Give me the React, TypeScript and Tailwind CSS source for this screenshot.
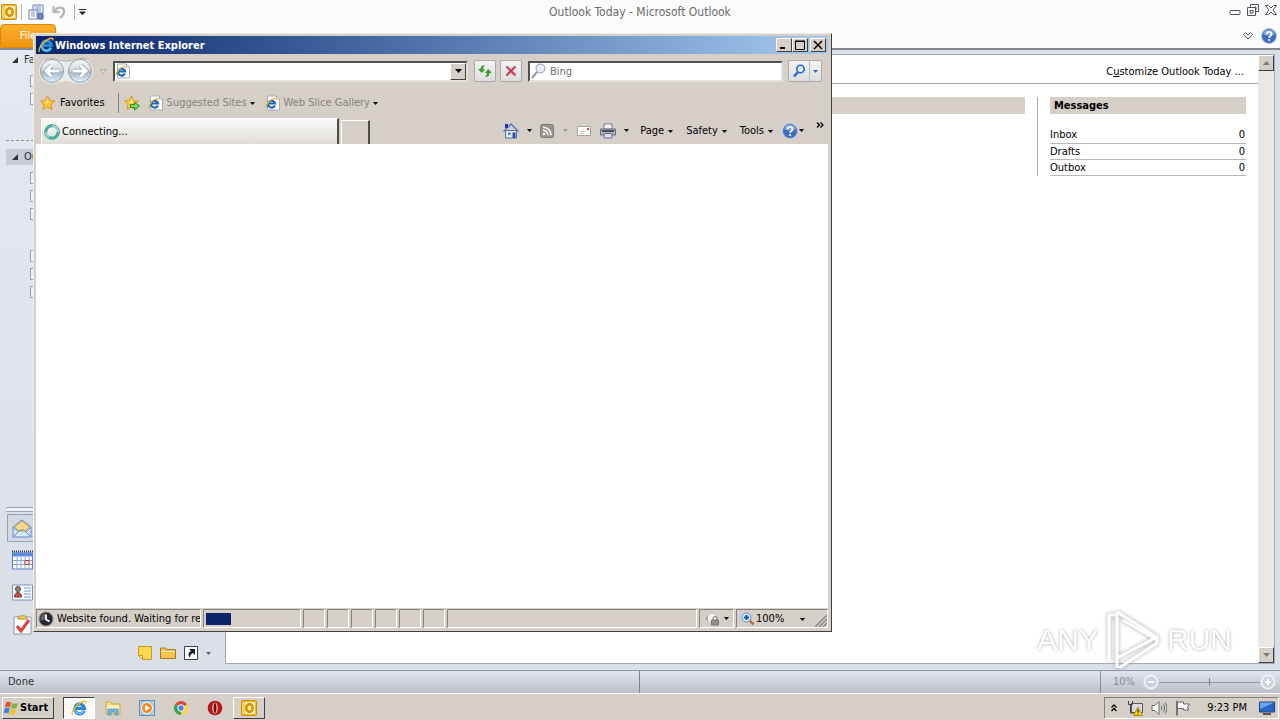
import type { ReactNode } from "react";

const raised =
  "border border-t-white border-l-white border-r-[#404040] border-b-[#404040] bg-[#d5cfc8]";
const sunken =
  "border border-t-[#808080] border-l-[#808080] border-r-white border-b-white";

function Caret({ className = "text-black" }: { className?: string }) {
  return (
    <svg viewBox="0 0 5 3" className={`h-[3px] w-[5px] shrink-0 ${className}`} aria-hidden="true">
      <path d="M0 0h5L2.500 3z" fill="currentColor" />
    </svg>
  );
}

function IeLogo({ className = "size-4" }: { className?: string }) {
  return (
    <svg viewBox="0 0 16 16" className={`shrink-0 ${className}`} aria-hidden="true">
      <path
        d="M13.200 10.600A4.900 4.900 0 1 1 13.500 8.400H5"
        fill="none"
        stroke="#2a86d4"
        strokeWidth="3.200"
      />
      <path d="M12.300 10.700A4.300 4.300 0 0 1 4 9.500" fill="none" stroke="#7cd0f6" strokeWidth="1.200" />
      <path
        d="M1.600 14.800C-.5 12.500 4.500 5.500 10 2.300c3-1.700 5.200-1.400 4.700 1"
        fill="none"
        stroke="#f0b92c"
        strokeWidth="1.500"
      />
    </svg>
  );
}

function IePage() {
  return (
    <svg viewBox="0 0 16 16" className="size-4 shrink-0" aria-hidden="true">
      <path d="M2.500 1h9L14.500 4V15h-12z" fill="#fff" stroke="#a4abb4" />
      <path d="M11.500 1v3h3" fill="#e8edf3" stroke="#a4abb4" />
      <path d="M9.800 10.500A3.500 3.500 0 1 1 10 8.500H4" fill="none" stroke="#1b66b8" strokeWidth="2.200" />
      <path d="M1 12.500C0 11 4 5.500 7.500 4c2-1 3-.5 2.600.8" fill="none" stroke="#eab42a" strokeWidth="1.300" />
    </svg>
  );
}

function OutlookLogo() {
  return (
    <svg viewBox="0 0 16 16" className="size-4 shrink-0" aria-hidden="true">
      <rect x=".5" y=".5" width="15" height="15" rx="1" fill="#f4b624" stroke="#d08c18" />
      <path d="M1 3l3-1v12l-3-1z" fill="#fbd24c" />
      <rect x="4" y="2" width="10" height="12" fill="#fff0b4" />
      <ellipse cx="8.500" cy="8" rx="3.200" ry="3.900" fill="none" stroke="#d8920c" strokeWidth="2.600" />
    </svg>
  );
}

function Star({ arrow = false }: { arrow?: boolean }) {
  return (
    <svg viewBox="0 0 16 16" className="size-4 shrink-0" aria-hidden="true">
      <path
        d="M7.500.8l2.100 4.700 5.100.6-3.800 3.400 1.100 5.100-4.500-2.600L3 14.600l1.100-5.100L.4 6.100l5-.6z"
        fill="#ffc82e"
        stroke="#d8962a"
      />
      <path d="M7.500 3l1.500 4-1.500 2-3-2.500h2z" fill="#ffe88c" />
      {arrow && <path d="M6.500 9.500h4V7.300l5 3.700-5 4v-2.500h-4z" fill="#7be05a" stroke="#1c8a22" />}
    </svg>
  );
}

function HelpIcon() {
  return (
    <svg viewBox="0 0 16 16" className="size-4 shrink-0" aria-hidden="true">
      <circle cx="8" cy="8" r="7.500" fill="#3c6cc4" stroke="#b4c6e4" />
      <path d="M2 6a6.300 6.300 0 0 1 12 0c-3 2-8 2-12 0z" fill="#7ba2e0" />
      <path d="M5.600 6.200c0-3.200 5-3.200 5 0 0 1.800-2.500 1.700-2.500 3.600" fill="none" stroke="#fff" strokeWidth="1.800" />
      <circle cx="8.100" cy="12" r="1.100" fill="#fff" />
    </svg>
  );
}

function NavArrows() {
  return (
    <svg viewBox="0 0 56 28" className="h-7 w-14" aria-hidden="true">
      <defs>
        <linearGradient id="orb" x1="0" y1="0" x2="0" y2="1">
          <stop offset="0" stopColor="#f8f9fa" />
          <stop offset=".46" stopColor="#d4d9de" />
          <stop offset=".54" stopColor="#a8b8c6" />
          <stop offset="1" stopColor="#dcf2fc" />
        </linearGradient>
      </defs>
      <path d="M14 1c6 0 8 2 14 2s8-2 14-2a13 13 0 0 1 0 26c-6 0-9-3-14-3s-8 3-14 3a13 13 0 0 1 0-26z" fill="#eceae8" />
      <path d="M7 3c7-4 13 1 21 1s14-5 21-1" fill="none" stroke="#a9a8a8" />
      <circle cx="14" cy="14" r="11.500" fill="url(#orb)" stroke="#97a1ab" />
      <circle cx="42" cy="14" r="11.500" fill="url(#orb)" stroke="#97a1ab" />
      <path d="M21 14H8m5.500-5.500L8 14l5.500 5.500" fill="none" stroke="#8e9cab" strokeWidth="4.500" />
      <path d="M35 14h13m-5.500-5.500L48 14l-5.500 5.500" fill="none" stroke="#8e9cab" strokeWidth="4.500" />
      <path d="M21 14H8m5.500-5.500L8 14l5.500 5.500" fill="none" stroke="#fff" strokeWidth="3" />
      <path d="M35 14h13m-5.500-5.500L48 14l-5.500 5.500" fill="none" stroke="#fff" strokeWidth="3" />
    </svg>
  );
}

const navIcons: { label: string; icon: ReactNode }[] = [
  {
    label: "Mail",
    icon: (
      <>
        <path d="M1 9l9-7 9 7v10H1z" fill="#d5e6fa" stroke="#6489bd" />
        <path d="M3 9l7-6 7 6-3 4H6z" fill="#fbd98c" stroke="#dba23c" />
        <path d="M1 19l7-7h4l7 7M1 9l6 5M19 9l-6 5" fill="none" stroke="#6489bd" />
      </>
    ),
  },
  {
    label: "Calendar",
    icon: (
      <>
        <path d="M.5 3h20v16H.5z" fill="#fff" stroke="#5b7ec4" />
        <path d="M0 3h21v3.500H0z" fill="#5a8be0" />
        <path d="M0 1.500h21" stroke="#303850" strokeWidth="2" strokeDasharray="1 1" />
        <path d="M1 10.500h19M1 14.500h19M5 7v12M9 7v12M13 7v12M17 7v12" stroke="#8ba5d4" />
        <path d="M13 10.500h4v4h-4z" fill="#fff" stroke="#d0342c" />
      </>
    ),
  },
  {
    label: "Contacts",
    icon: (
      <>
        <path d="M.5 3h20v15H.5z" fill="#f6f9fd" stroke="#7c93bb" />
        <circle cx="6" cy="7" r="2.500" fill="#a08070" stroke="#4c4c4c" />
        <path d="M2.500 15c0-6 7-6 7 0z" fill="#cf4a32" stroke="#6b4038" />
        <path d="M12 6h7M12 9h7M12 12h7M12 15h7" stroke="#6c9be0" />
      </>
    ),
  },
  {
    label: "Tasks",
    icon: (
      <>
        <path d="M2 3h17v17H2z" fill="#fff" stroke="#8297bd" />
        <path d="M6 4c0-3 9-3 9 0v1H6z" fill="#f5cf62" stroke="#b48a26" />
        <path d="M5 12l4 5 8-11" fill="none" stroke="#e2403a" strokeWidth="3" />
      </>
    ),
  },
];

function OutlookTitleBar() {
  return (
    <header className="grid h-6 shrink-0 grid-cols-[1fr_auto_1fr] items-center bg-[#fbfbfb]">
      <div className="flex items-center gap-1 pl-px">
        <OutlookLogo />
        <span className="h-4 w-px bg-[#b8b8b8]" />
        <button type="button" aria-label="Send and receive" className="ml-0.5">
          <svg viewBox="0 0 16 16" className="size-4" aria-hidden="true">
            <path d="M5 1h10v8H5z" fill="#f2f6fc" stroke="#6a7da8" />
            <path d="M7 3h6M7 5h6M7 7h6" stroke="#7b93c4" />
            <path d="M1 6h8v9H1z" fill="#fff" stroke="#6a7da8" />
            <path d="M3 8h4M3 10h4M3 12h4" stroke="#7b93c4" />
            <path d="M10 10h5v5h-5z" fill="#7090cc" stroke="#445f98" />
          </svg>
        </button>
        <button type="button" aria-label="Undo" className="ml-1">
          <svg viewBox="0 0 14 14" className="size-3.5" fill="none" stroke="#b0b3b7" aria-hidden="true">
            <path d="M3 5.500C6 1 12.500 2 12 7c-.3 2.500-2 4.500-4 6" strokeWidth="2.200" />
            <path d="M1.500 1v6h6" strokeWidth="2" />
          </svg>
        </button>
        <span className="ml-1 h-4 w-px bg-[#b8b8b8]" />
        <button type="button" aria-label="Customize toolbar">
          <svg viewBox="0 0 7 6" className="h-1.5 w-[7px]" aria-hidden="true">
            <path d="M0 0h7v1H0zM0 2.500h7L3.500 6z" fill="#222" />
          </svg>
        </button>
      </div>
      <h1 className="text-xs text-[#6a6a6a]">Outlook Today - Microsoft Outlook</h1>
      <div className="flex items-center justify-end gap-1.5 pr-[3px] pb-1 text-[#4a5260]">
        <button type="button" aria-label="Minimize">
          <svg viewBox="0 0 12 12" className="size-3" fill="none" stroke="currentColor" aria-hidden="true">
            <rect x="1" y="6.500" width="10" height="4" rx="1" />
          </svg>
        </button>
        <button type="button" aria-label="Restore">
          <svg viewBox="0 0 12 12" className="size-3" fill="none" stroke="currentColor" aria-hidden="true">
            <path d="M3.500 3.500v-3h8v7h-3M.5 3.500h8v8h-8z" />
            <path d="M3 6.500h3v2.500H3zM8 3h1v3" />
          </svg>
        </button>
        <button type="button" aria-label="Close">
          <svg viewBox="0 0 12 12" className="size-3" fill="none" stroke="currentColor" aria-hidden="true">
            <path d="M.5 1.500h3L6 4l2.500-2.500h3L8 6l3.500 4.500h-3L6 8l-2.500 2.500h-3L4 6z" />
          </svg>
        </button>
      </div>
    </header>
  );
}

function OutlookSidebar() {
  return (
    <aside className="flex w-[225px] shrink-0 flex-col bg-gradient-to-b from-[#e4e9f0] to-[#dadee6] text-[11px] text-[#303030]">
      <TreeGroup name="Favorites" items={2} />
      <div className="mx-1.5 mt-8 border-t border-dashed border-[#8c929a]" />
      <div className="mt-2">
        <TreeGroup name="Outlook" items={3} selected />
      </div>
      <div className="mt-6 flex flex-col">
        {[0, 1, 2].map((i) => (
          <FolderRow key={i} />
        ))}
      </div>
      <div className="mx-1.5 mt-auto h-[5px] shrink-0 border-y border-[#9aa3b0] bg-[#eef1f5]" />
      <div className="mt-0.5 flex flex-col">
        {navIcons.map((item, i) => (
          <button
            key={item.label}
            type="button"
            aria-label={item.label}
            className={`ml-[7px] flex h-7 items-center border pl-1 ${
              i === 0 ? "border-[#9aa3b0] bg-[#d3dae5]" : "mt-1 border-transparent"
            }`}
          >
            <svg viewBox="0 0 21 21" className="size-[21px]" aria-hidden="true">
              {item.icon}
            </svg>
          </button>
        ))}
      </div>
      <div className="flex h-8 items-center justify-end gap-2 pr-3.5 pb-0.5">
        <button type="button" aria-label="Notes">
          <svg viewBox="0 0 14 14" className="size-3.5" aria-hidden="true">
            <path d="M.5.5h13v13h-9l-4-4z" fill="#fbd64e" stroke="#c79a1c" />
            <path d="M.5 9.500l4 4v-4z" fill="#fff2b0" stroke="#c79a1c" />
          </svg>
        </button>
        <button type="button" aria-label="Folder list">
          <svg viewBox="0 0 16 14" className="h-3.5 w-4" aria-hidden="true">
            <path d="M.5 2h5l1 1.500h9v9H.5z" fill="#f6c44c" stroke="#aa7d1c" />
            <path d="M1 5.500h14" stroke="#fff0b8" />
          </svg>
        </button>
        <button type="button" aria-label="Shortcuts">
          <svg viewBox="0 0 14 14" className="size-3.5" aria-hidden="true">
            <path d="M.5.5h13v13H.5z" fill="#fff" stroke="#33415c" />
            <path d="M5 3h6v6L9 7c-2 1-3 2-3 5-3-4-1-6 1-7z" fill="#14203a" />
          </svg>
        </button>
        <button type="button" aria-label="Configure buttons">
          <Caret className="text-[#5a6270]" />
        </button>
      </div>
    </aside>
  );
}

function FolderRow() {
  return (
    <div className="flex h-[18px] items-center pl-[30px]">
      <span className="h-3 w-4 border border-[#9ba1a8] bg-[#f0f2f5]" />
    </div>
  );
}

function TreeGroup({ name, items, selected = false }: { name: string; items: number; selected?: boolean }) {
  return (
    <div>
      <div
        className={`ml-1.5 flex h-4 items-center gap-1.5 pl-1.5 ${
          selected ? "bg-[#c6ccd6]" : "mt-0.5"
        }`}
      >
        <svg viewBox="0 0 6 6" className="size-1.5 shrink-0" aria-hidden="true">
          <path d="M6 0v6H0z" fill="#333" />
        </svg>
        <span>{name}</span>
      </div>
      <div className="pt-1">
        {Array.from({ length: items }, (_, i) => (
          <FolderRow key={i} />
        ))}
      </div>
    </div>
  );
}

function ScrollButton({ down = false }: { down?: boolean }) {
  return (
    <button
      type="button"
      aria-label={down ? "Scroll down" : "Scroll up"}
      className={`flex size-4 items-center justify-center ${raised}`}
    >
      <svg viewBox="0 0 7 4" className="h-1 w-[7px]" aria-hidden="true">
        <path d={down ? "M0 0h7L3.500 4z" : "M0 4h7L3.500 0z"} fill="#7c7c74" />
      </svg>
    </button>
  );
}

function OutlookToday() {
  const folders = ["Inbox", "Drafts", "Outbox"];
  return (
    <main className="mt-1 mr-[5px] mb-1.5 flex min-w-0 flex-1 border border-[#a4abb4] bg-white text-[11px]">
      <div className="flex min-w-0 flex-1 flex-col">
        <div className="flex h-[29px] items-center justify-end border-b border-[#a8a8a8] pt-1.5 pr-3.5">
          <a href="#customize" className="text-black">
            C<u>u</u>stomize Outlook Today ...
          </a>
        </div>
        <div className="flex pt-[13px] pr-3">
          <div className="flex-1 pr-3">
            <div className="h-[17px] bg-[#d5cfc8]" />
          </div>
          <section className="w-[209px] border-l border-[#a8a8a8] pl-3">
            <h2 className="h-[17px] bg-[#d5cfc8] pl-1 text-[11px] leading-[18px] font-bold">Messages</h2>
            <table className="mt-[13px] w-full border-collapse">
              <tbody>
                {folders.map((name) => (
                  <tr key={name} className="h-4 border-b border-[#b8b8b8]">
                    <th scope="row" className="p-0 text-left leading-[15px] font-normal">
                      {name}
                    </th>
                    <td className="p-0 pr-px text-right leading-[15px]">0</td>
                  </tr>
                ))}
              </tbody>
            </table>
          </section>
        </div>
      </div>
      <div className="flex w-4 flex-col justify-between bg-[#ebe8e4]">
        <ScrollButton />
        <ScrollButton down />
      </div>
    </main>
  );
}

function OutlookWindow() {
  return (
    <div className="flex min-h-0 flex-1 flex-col">
      <OutlookTitleBar />
      <div className="flex h-6 shrink-0 items-center justify-between bg-[#fbfbfb]">
        <button
          type="button"
          className="h-full w-14 rounded-t-sm border border-[#d98a12] bg-gradient-to-b from-[#fbb02c] to-[#f2930a] text-[11px] text-white"
        >
          File
        </button>
        <div className="flex items-center gap-2 pr-[3px]">
          <button type="button" aria-label="Expand the ribbon">
            <svg viewBox="0 0 10 8" className="h-2 w-2.5" aria-hidden="true">
              <path d="M.5 2.500l2-2L5 3 7.500.5l2 2L5 7z" fill="none" stroke="#4a5260" />
            </svg>
          </button>
          <button type="button" aria-label="Help">
            <HelpIcon />
          </button>
        </div>
      </div>
      <div className="flex min-h-0 flex-1 border-t-2 border-[#858a90] bg-[#d9e0e8]">
        <OutlookSidebar />
        <OutlookToday />
      </div>
      <footer className="grid h-[23px] shrink-0 grid-cols-2 border-t border-[#8f99a6] bg-gradient-to-b from-[#e0e4ee] to-[#bcc0c8] text-[11px] text-[#333]">
        <div className="flex items-center border-r border-[#7c828c] pl-2">Done</div>
        <div className="flex items-center justify-end">
          <div className="flex h-full items-center gap-2 border-l border-[#8a909a] pl-3 pr-1 text-[#858a92]">
            <span>10%</span>
            <div className="flex items-center">
              <ZoomKnob label="Zoom out" path="M5 8h6" />
              <div className="flex h-2 w-[101px] items-center justify-center bg-[linear-gradient(#8f959e,#8f959e)] bg-[length:100%_1px] bg-center bg-no-repeat">
                <span className="h-2 w-px bg-[#7c828c]" />
              </div>
              <ZoomKnob label="Zoom in" path="M5 8h6M8 5v6" />
            </div>
          </div>
        </div>
      </footer>
    </div>
  );
}

function ZoomKnob({ label, path }: { label: string; path: string }) {
  return (
    <button type="button" aria-label={label}>
      <svg viewBox="0 0 16 16" className="size-4" aria-hidden="true">
        <circle cx="8" cy="8" r="6.500" fill="#cdd1d9" stroke="#eef0f4" strokeWidth="2" />
        <path d={path} stroke="#fff" strokeWidth="2" />
      </svg>
    </button>
  );
}

function Watermark() {
  return (
    <div className="pointer-events-none absolute right-12 bottom-12 flex items-center gap-1 font-['Liberation_Sans_Narrow','Liberation_Sans',sans-serif] text-3xl text-white [text-shadow:0_0_3px_#999] opacity-90">
      <span>ANY</span>
      <svg viewBox="0 0 60 64" className="h-16 w-[60px] drop-shadow-[0_0_2px_#999]" aria-hidden="true">
        <path
          d="M12 7H6v46M14 4l40 25v6L16 60M14 4v46l40-21M20 12l34 20M14 50v10"
          fill="none"
          stroke="#fff"
          strokeWidth="3"
          strokeLinejoin="round"
        />
      </svg>
      <span>RUN</span>
    </div>
  );
}

function WindowButton({ label, children }: { label: string; children: ReactNode }) {
  return (
    <button type="button" aria-label={label} className={`flex h-3.5 w-4 items-center justify-center ${raised}`}>
      <svg viewBox="0 0 10 10" className="size-2.5" fill="none" stroke="#000" aria-hidden="true">
        {children}
      </svg>
    </button>
  );
}

function AddressRow() {
  const glass = "border border-[#aaa9a8] rounded-xs bg-gradient-to-b from-[#f3f3f3] to-[#dcdedf]";
  const field = "border-2 border-t-[#505050] border-l-[#505050] border-r-[#e4e0da] border-b-[#e4e0da] bg-white";
  return (
    <div className="flex h-[34px] shrink-0 items-center pr-[6px] pl-[2px]">
      <button type="button" aria-label="Back and forward">
        <NavArrows />
      </button>
      <button type="button" aria-label="Recent pages" className="mx-0.5 flex w-[15px] justify-center">
        <svg viewBox="0 0 7 5" className="h-[5px] w-[7px]" aria-hidden="true">
          <path d="M.5.5h6L3.500 4z" fill="#e6e2dc" stroke="#aaa59e" />
        </svg>
      </button>
      <div className={`flex h-[21px] w-[355px] items-center ${field}`}>
        <IePage />
        <input type="text" aria-label="Address" className="h-full min-w-0 flex-1 px-1 outline-none" />
        <button type="button" aria-label="Show addresses" className={`flex h-full w-4 items-center justify-center ${raised}`}>
          <svg viewBox="0 0 7 4" className="h-1 w-[7px]" aria-hidden="true">
            <path d="M0 0h7L3.500 4z" />
          </svg>
        </button>
      </div>
      <button type="button" aria-label="Refresh" className={`ml-1.5 flex size-[22px] items-center justify-center ${glass}`}>
        <svg viewBox="0 0 16 16" className="size-4" fill="#3a9a30" aria-hidden="true">
          <path d="M8 2C5 2 3.500 3.500 3.500 6h-2.500L4.800 10 8 6H6c0-1.500.5-2.500 2-4z" />
          <path d="M8 14c3 0 4.500-1.500 4.500-4h2.500L11.200 6 8 10h2c0 1.500-.5 2.500-2 4z" />
        </svg>
      </button>
      <button type="button" aria-label="Stop" className={`ml-1 flex size-[22px] items-center justify-center ${glass}`}>
        <svg viewBox="0 0 12 12" className="size-3" aria-hidden="true">
          <path d="M1.500 1.500l9 9M10.500 1.500l-9 9" stroke="#c8384a" strokeWidth="2" />
        </svg>
      </button>
      <div className={`ml-1.5 flex h-[21px] min-w-0 flex-1 items-center ${field}`}>
        <svg viewBox="0 0 16 16" className="ml-px size-4 shrink-0" aria-hidden="true">
          <circle cx="9.500" cy="5.500" r="4.500" fill="#e4f0fa" stroke="#8d98a6" />
          <path d="M6 9l-5 6" stroke="#8d98a6" strokeWidth="2" />
        </svg>
        <input
          type="text"
          aria-label="Search"
          placeholder="Bing"
          className="h-full min-w-0 flex-1 pt-px pl-[3px] outline-none placeholder:text-[#6f6f6f]"
        />
      </div>
      <div className={`ml-[5px] flex h-[22px] w-[34px] ${glass}`}>
        <button type="button" aria-label="Search the web" className="flex flex-1 items-center justify-center">
          <svg viewBox="0 0 14 14" className="size-3.5" aria-hidden="true">
            <circle cx="8.500" cy="5" r="3.700" fill="#e6f1ff" stroke="#2a62d0" strokeWidth="1.600" />
            <path d="M6 8l-4 4.500" stroke="#2a62d0" strokeWidth="2.400" />
          </svg>
        </button>
        <button type="button" aria-label="Search options" className="flex w-3 items-center justify-center border-l border-[#b8b8b8]">
          <Caret className="text-[#2a66b8]" />
        </button>
      </div>
    </div>
  );
}

function FavoritesRow() {
  return (
    <div className="flex h-[29px] shrink-0 items-center pt-px pl-1 whitespace-nowrap">
      <button type="button" className="flex items-center gap-1">
        <Star />
        Favorites
      </button>
      <span className="ml-[13px] h-5 w-px bg-[#85817c]" />
      <button type="button" aria-label="Add to Favorites Bar" className="ml-[5px]">
        <Star arrow />
      </button>
      <button type="button" className="ml-2 flex w-[107px] items-center gap-[3px] text-[#85827e]">
        <IePage />
        <span className="flex-1 text-left">Suggested Sites</span>
        <Caret />
      </button>
      <button type="button" className="ml-[10px] flex w-[113px] items-center gap-[3px] text-[#85827e]">
        <IePage />
        <span className="min-w-0 flex-1 text-left">Web Slice Gallery</span>
        <Caret />
      </button>
    </div>
  );
}

function TabRow() {
  const menus = ["Page", "Safety", "Tools"];
  return (
    <div className="flex h-[27px] shrink-0 items-end pl-[5px]">
      <button
        type="button"
        role="tab"
        aria-selected="true"
        className="flex h-[26px] w-[298px] items-center gap-0.5 border-t border-r-2 border-l border-t-white border-l-white border-r-[#504c48] bg-gradient-to-b from-[#fbfbfa] to-[#e0ddd8] pt-px pl-0.5"
      >
        <svg viewBox="0 0 16 16" className="size-4" fill="none" aria-hidden="true">
          <circle cx="8" cy="8" r="6" stroke="#9cd8d0" strokeWidth="3" />
          <circle cx="8" cy="8" r="7.500" stroke="#5aaca4" />
          <path d="M2 8a6 6 0 0 1 6-6M14 8a6 6 0 0 1-9 5" stroke="#3fa59c" strokeWidth="2" />
        </svg>
        Connecting...
      </button>
      <button
        type="button"
        aria-label="New tab"
        className="ml-0.5 h-6 w-[29px] border-t border-r-2 border-l border-t-white border-l-white border-r-[#504c48]"
      />
      <div className="flex h-full flex-1 items-center justify-end">
        <button type="button" aria-label="Home" className="flex items-center gap-2">
          <svg viewBox="0 0 16 16" className="size-4" aria-hidden="true">
            <path d="M2.500 7.500h11V15h-11z" fill="#dfeafa" stroke="#55719c" />
            <path d="M.5 8.500L8 1l7.500 7.500" fill="none" stroke="#5d7bb0" strokeWidth="1.500" />
            <path d="M2 1h3v4H2z" fill="#2434b8" />
            <path d="M9.500 9.500h3V15h-3z" fill="#2c4f94" />
            <path d="M5 9.500h2.500V12H5z" fill="#4d7ac0" />
          </svg>
          <Caret />
        </button>
        <button type="button" aria-label="Feeds" className="ml-2 flex items-center gap-[9px]">
          <svg viewBox="0 0 14 14" className="size-3.5" aria-hidden="true">
            <rect x=".5" y=".5" width="13" height="13" rx="2" fill="#98948f" stroke="#7c7873" />
            <circle cx="4" cy="10" r="1.300" fill="#fff" />
            <path d="M3 6.200a5 5 0 0 1 5 5M3 3.200a8 8 0 0 1 8 8" fill="none" stroke="#fff" strokeWidth="1.500" />
          </svg>
          <Caret className="text-[#9b9792]" />
        </button>
        <button type="button" aria-label="Read mail" className="ml-2">
          <svg viewBox="0 0 16 16" className="size-4" aria-hidden="true">
            <path d="M1.500 3.500h13v9h-13z" fill="#fbfbfb" stroke="#a8a29c" />
            <path d="M11 5h2v2h-2z" fill="#d43a34" />
            <path d="M4 8.500h5M4 10.500h4" stroke="#ccc8c4" />
          </svg>
        </button>
        <button type="button" aria-label="Print" className="ml-2 flex items-center gap-2">
          <svg viewBox="0 0 16 16" className="size-4" aria-hidden="true">
            <path d="M4 1h8v5H4z" fill="#fff" stroke="#6f7682" />
            <path d="M.5 6h15v6H.5z" fill="#b4b6ba" stroke="#6a6d72" />
            <path d="M2 8h12" stroke="#4a4c50" strokeWidth="2" />
            <path d="M4 10.500h8V15H4z" fill="#cfe0f2" stroke="#6f7682" />
          </svg>
          <Caret />
        </button>
        {menus.map((name, i) => (
          <button
            key={name}
            type="button"
            className={`flex items-center gap-1 pt-px ${i === 0 ? "ml-[11px]" : "ml-[13px]"}`}
          >
            {name}
            <Caret />
          </button>
        ))}
        <button type="button" aria-label="Help" className="ml-[9px] flex items-center gap-px">
          <HelpIcon />
          <Caret />
        </button>
        <button type="button" aria-label="More commands" className="mr-1 mb-3 ml-3">
          <svg viewBox="0 0 8 6" className="h-1.5 w-2" fill="none" stroke="#000" strokeWidth="1.300" aria-hidden="true">
            <path d="M1 .5L3.500 3 1 5.500M4.500.5L7 3 4.500 5.500" />
          </svg>
        </button>
      </div>
    </div>
  );
}

function IeStatusBar() {
  return (
    <div className="flex h-[21px] shrink-0 items-center gap-[2px] bg-[#d5cfc8]">
      <div className={`flex h-[19px] w-[165px] items-center gap-[3px] overflow-hidden pt-px whitespace-nowrap ${sunken}`}>
        <svg viewBox="0 0 16 16" className="ml-px size-4 shrink-0" aria-hidden="true">
          <circle cx="8" cy="8" r="7" fill="#26282c" stroke="#8c8c8c" />
          <path d="M8 8V2.500A5.500 5.500 0 0 0 2.800 10z" fill="#606468" />
          <path d="M8 3.500v5l3.500 2" fill="none" stroke="#fff" strokeWidth="1.800" />
        </svg>
        Website found. Waiting for re
      </div>
      <div role="progressbar" aria-label="Loading" className={`flex h-[19px] w-[98px] items-center pl-0.5 ${sunken}`}>
        <span className="h-3 w-[25px] bg-[#0a246a]" />
      </div>
      {Array.from({ length: 6 }, (_, i) => (
        <div key={i} className={`h-[19px] w-[22px] ${sunken}`} />
      ))}
      <div className={`h-[19px] flex-1 ${sunken}`} />
      <button type="button" aria-label="Protected mode" className={`flex h-[19px] w-[35px] items-center justify-between px-1 ${sunken}`}>
        <svg viewBox="0 0 16 16" className="size-4" aria-hidden="true">
          <circle cx="8" cy="7" r="5" fill="#f0efee" stroke="#c4c0bc" />
          <path d="M1 7l3-3v6z" fill="#a8a4a0" />
          <path d="M9 9V7.500a2 2 0 0 1 4 0V9" fill="none" stroke="#77736f" />
          <path d="M7.500 9h7v5h-7z" fill="#918d89" stroke="#77736f" />
        </svg>
        <Caret />
      </button>
      <div className={`flex h-[19px] w-[92px] items-center justify-between pl-1 ${sunken}`}>
        <button type="button" className="flex w-16 items-center gap-px pt-px">
          <svg viewBox="0 0 14 14" className="size-3.5" aria-hidden="true">
            <path d="M8.500 8.500l4 4" stroke="#b0763a" strokeWidth="2.500" />
            <circle cx="5.500" cy="5.500" r="4.500" fill="#d4e8fc" stroke="#5e94d0" />
            <path d="M5.500 3v5M3 5.500h5" stroke="#1c58a8" strokeWidth="2" />
          </svg>
          <span className="flex-1 text-left whitespace-nowrap">100%</span>
          <Caret />
        </button>
        <svg viewBox="0 0 12 12" className="mt-1 size-3" aria-hidden="true">
          <path d="M0 12L12 0M4 12l8-8M8 12l4-4" stroke="#8c8883" strokeWidth="1.500" />
        </svg>
      </div>
    </div>
  );
}

function IeWindow() {
  return (
    <div className="absolute top-[33px] left-[33px] flex h-[599px] w-[799px] flex-col border border-t-[#f0eeea] border-l-[#f0eeea] border-r-[#404040] border-b-[#404040] bg-[#d5cfc8] py-0.5 pr-[3px] pl-0.5 text-[11px] text-black">
      <div className="flex h-[18px] shrink-0 items-center bg-gradient-to-r from-[#0a246a] to-[#a6caf0] pr-0.5 pl-[2px]">
        <IeLogo />
        <h2 className="ml-px flex-1 pt-px text-[11px] font-bold text-white">Windows Internet Explorer</h2>
        <WindowButton label="Minimize IE">
          <path d="M1 8h5" strokeWidth="2" />
        </WindowButton>
        <WindowButton label="Maximize IE">
          <path d="M.5 1.500h9v8h-9zM0 1h10" />
        </WindowButton>
        <span className="w-0.5" />
        <WindowButton label="Close IE">
          <path d="M1 1l8 8M9 1L1 9" strokeWidth="1.500" />
        </WindowButton>
      </div>
      <AddressRow />
      <FavoritesRow />
      <TabRow />
      <div className="min-h-0 flex-1 bg-white" />
      <IeStatusBar />
    </div>
  );
}

function Taskbar() {
  const task = "flex h-[22px] w-8 items-center justify-center";
  return (
    <footer className="flex h-[27px] shrink-0 items-center border-t border-white bg-[#d5cfc8] pt-px pr-px pl-0.5 text-[11px]">
      <button type="button" className={`flex h-[22px] w-[52px] items-center gap-px font-bold ${raised}`}>
        <svg viewBox="0 0 16 16" className="size-4" aria-hidden="true">
          <path d="M3 2.500c2-1 3.500-1 5 0L7 7.500c-1.500-1-3-1-5 0z" fill="#e8502c" />
          <path d="M9 3c2 1 3.500 1 6 0l-1.500 5c-2 1-3.500 1-5.500 0z" fill="#7cb83c" />
          <path d="M1.800 8.500c2-1 3.500-1 5 0l-1.300 5c-1.500-1-3-1-5 0z" fill="#3f7fd4" />
          <path d="M7.800 9c2 1 3.500 1 5.500 0L12 14c-2 1-3.500 1-5.500 0z" fill="#f6c02c" />
        </svg>
        Start
      </button>
      <button
        type="button"
        aria-label="Internet Explorer"
        className={`ml-[9px] border border-t-[#404040] border-l-[#404040] border-r-white border-b-white bg-[#fbfaf9] ${task}`}
      >
        <IeLogo />
      </button>
      <button type="button" aria-label="File Explorer" className={`ml-0.5 ${task}`}>
        <svg viewBox="0 0 16 16" className="size-4" aria-hidden="true">
          <path d="M1 2h5l1 2h8v10H1z" fill="#f7dc7c" stroke="#d0a848" />
          <path d="M2 5h12v4H2z" fill="#fbf0b8" />
          <path d="M3 15V9h10v6h-3v-3H6v3z" fill="#6cb8e8" stroke="#3c88c0" strokeWidth=".6" />
        </svg>
      </button>
      <button type="button" aria-label="Media Player" className={`ml-0.5 ${task}`}>
        <svg viewBox="0 0 16 16" className="size-4" aria-hidden="true">
          <path d="M.5.500h15v15H.5z" fill="#a8cdec" stroke="#5c90c0" />
          <circle cx="8" cy="8" r="5.500" fill="#f08a1c" stroke="#fff" />
          <path d="M6.200 4.800l5 3.200-5 3.200z" fill="#fff" />
        </svg>
      </button>
      <button type="button" aria-label="Chrome" className={`ml-0.5 ${task}`}>
        <svg viewBox="0 0 16 16" className="size-4" aria-hidden="true">
          <path d="M8 8L1.900 4.500a7 7 0 0 1 12.200 0z" fill="#dd4b3e" />
          <path d="M8 8l6.100-3.500A7 7 0 0 1 8 15z" fill="#fdd042" />
          <path d="M8 8v7A7 7 0 0 1 1.900 4.500z" fill="#36a355" />
          <circle cx="8" cy="8" r="3.300" fill="#4a86e8" stroke="#fff" />
        </svg>
      </button>
      <button type="button" aria-label="Opera" className={`ml-0.5 ${task}`}>
        <svg viewBox="0 0 16 16" className="size-4" aria-hidden="true">
          <circle cx="8" cy="8" r="7.300" fill="#b8161c" />
          <ellipse cx="8" cy="8" rx="2.700" ry="5.500" fill="#e8dcd8" />
          <ellipse cx="8" cy="8" rx="1.500" ry="5" fill="#7c0c10" />
        </svg>
      </button>
      <button type="button" aria-label="Outlook" className={`ml-0.5 ${raised} ${task}`}>
        <OutlookLogo />
      </button>
      <div className={`ml-auto flex h-[22px] items-center pr-[3px] pl-1.5 ${sunken}`}>
        <button type="button" aria-label="Show hidden icons">
          <svg viewBox="0 0 6 8" className="h-2 w-1.5" fill="none" stroke="#000" strokeWidth="1.300" aria-hidden="true">
            <path d="M.5 3.500L3 1l2.500 2.500M.5 7L3 4.500 5.500 7" />
          </svg>
        </button>
        <svg viewBox="0 0 16 16" className="ml-2.5 size-4" aria-hidden="true">
          <path d="M4.500 3.500h11v9h-11z" fill="#dcdcdc" stroke="#55565a" />
          <path d="M1.500 1v3.500h4V1M3.500 4.500V13h3" fill="none" stroke="#44464a" />
          <path d="M11 7l4.500 8.500h-9z" fill="#ffd91c" stroke="#a88a10" />
          <path d="M11 9.500v3M11 13.500v1" stroke="#000" />
        </svg>
        <svg viewBox="0 0 16 16" className="ml-2 size-4" fill="none" stroke="#66686c" aria-hidden="true">
          <path d="M1 5.500h3l4-4v13l-4-4H1z" fill="#f8f8f8" />
          <path d="M10 5.500c1 1.500 1 3.500 0 5M12 3.500c2 3 2 6 0 9M14 2c2.500 4 2.500 8 0 12" />
        </svg>
        <svg viewBox="0 0 16 16" className="ml-2 size-4" aria-hidden="true">
          <path d="M2 1v14.500" stroke="#55565a" strokeWidth="1.500" />
          <path d="M2.500 2h6v2h6l-2 3 1 3h-5V8.500h-6z" fill="#fbfbfb" stroke="#66686c" />
        </svg>
        <time className="ml-4 pt-px whitespace-nowrap">9:23 PM</time>
        <svg viewBox="0 0 16 14" className="ml-3 h-3.5 w-4" aria-hidden="true">
          <path d="M.5 1h15v10H.5z" fill="#2a66c8" stroke="#244078" />
          <path d="M1 1.500h14L1 8z" fill="#6aa4ec" />
          <path d="M4 13h8" stroke="#555" strokeWidth="2" />
        </svg>
      </div>
    </footer>
  );
}

export default function App() {
  return (
    <div className="relative flex h-screen flex-col overflow-hidden font-['DejaVu_Sans_Condensed','DejaVu_Sans',sans-serif] leading-4">
      <OutlookWindow />
      <Taskbar />
      <IeWindow />
      <Watermark />
    </div>
  );
}
